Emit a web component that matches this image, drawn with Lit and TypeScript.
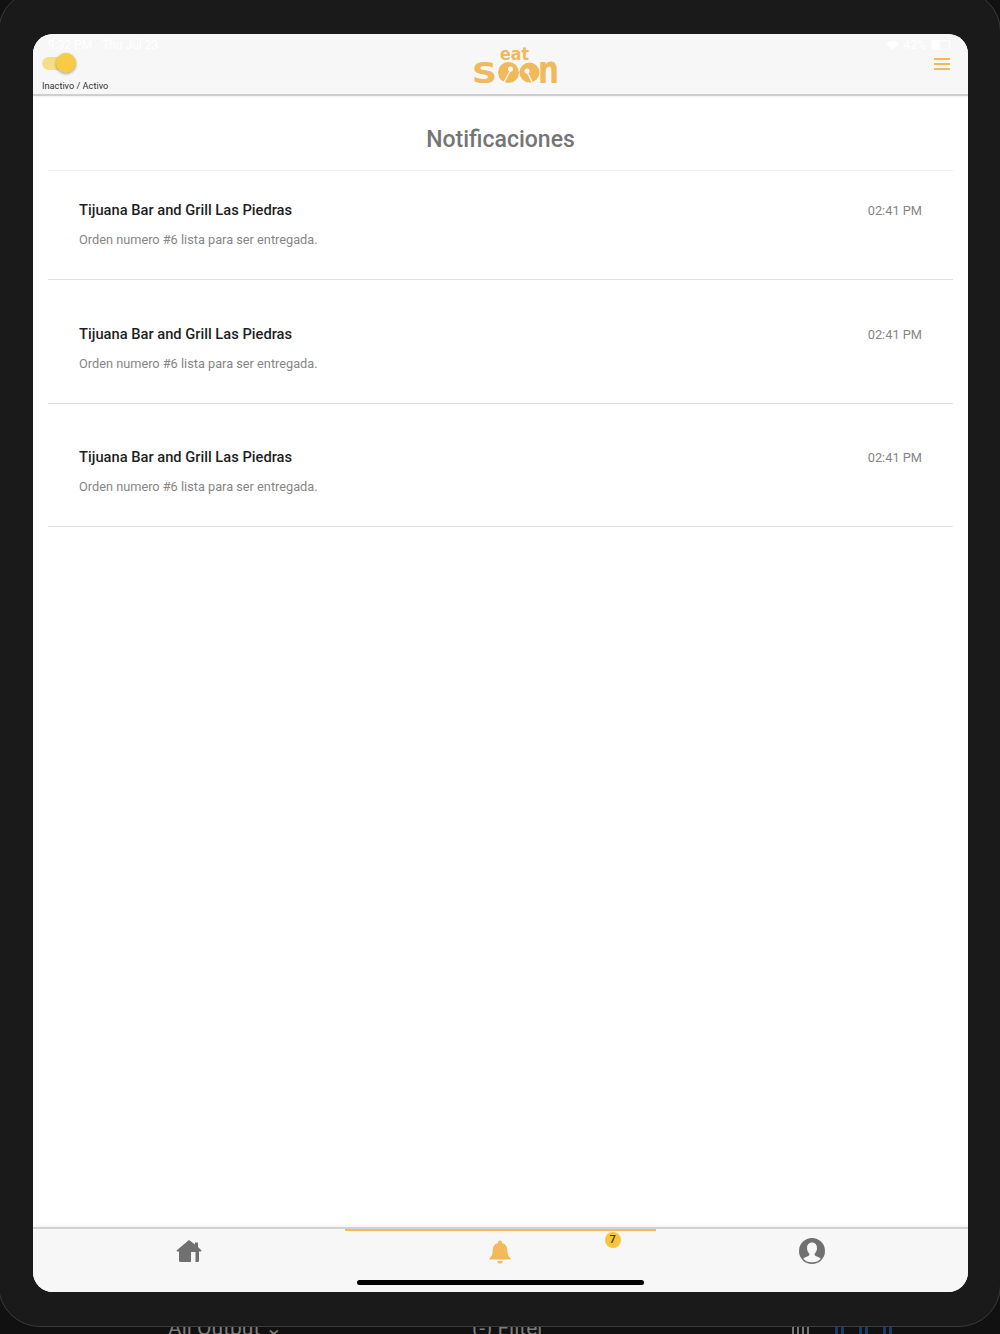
import { LitElement, html, css } from 'lit';
import { customElement } from 'lit/decorators.js';

const NOTIFICATIONS = [
  { title: 'Tijuana Bar and Grill Las Piedras', body: 'Orden numero #6 lista para ser entregada.', time: '02:41 PM' },
  { title: 'Tijuana Bar and Grill Las Piedras', body: 'Orden numero #6 lista para ser entregada.', time: '02:41 PM' },
  { title: 'Tijuana Bar and Grill Las Piedras', body: 'Orden numero #6 lista para ser entregada.', time: '02:41 PM' },
];

const logo = html`
  <svg class="logo" width="90" height="38" viewBox="0 0 90 38" aria-label="eat soon">
    <g fill="#f0b95a" font-family="'DejaVu Sans', sans-serif" font-weight="700">
      <text x="29" y="13" font-size="17" textLength="29" lengthAdjust="spacingAndGlyphs">eat</text>
      <text x="1" y="36" font-size="29" textLength="25" lengthAdjust="spacingAndGlyphs">S</text>
      <text x="67" y="36" font-size="37" textLength="21" lengthAdjust="spacingAndGlyphs">n</text>
    </g>
    <!-- the two O are plates with a spoon cut out -->
    <circle cx="37.5" cy="25.5" r="10.5" fill="#f0b95a" />
    <circle cx="39.5" cy="22" r="2.6" fill="#f7f7f7" />
    <path d="M38.8 23 L40 23.6 L33.5 36 L32.2 35.4 Z" fill="#f7f7f7" />
    <circle cx="58.5" cy="25.5" r="10" fill="#f0b95a" />
    <circle cx="56" cy="24" r="2.6" fill="#f7f7f7" />
    <path d="M55.4 25 L56.6 24.4 L62 35.2 L60.7 35.8 Z" fill="#f7f7f7" />
  </svg>
`;

const homeIcon = html`
  <svg width="26" height="24" viewBox="0 0 26 24">
    <path d="M13 1 L19 5.5 V3.5 H22 V8 L25.5 11.5 L25 12.6 H23 V21.5 Q23 23 21.5 23 H4.5 Q3 23 3 21.5 V12.6 H1 L.5 11.5 Z" fill="#707070" />
    <rect x="15" y="13" width="4.5" height="10" fill="#f7f7f7" />
  </svg>
`;

const bellIcon = html`
  <svg width="22" height="24" viewBox="0 0 22 24">
    <path d="M11 0.5 a2 2 0 0 1 2 2 v.6 c3.6 1 5.4 3.8 5.4 7.4 c0 3.7 .9 5.6 3 7.7 v1.3 H.6 v-1.3 c2.1-2.1 3-4 3-7.7 c0-3.6 1.8-6.4 5.4-7.4 v-.6 a2 2 0 0 1 2-2 Z" fill="#f3b95a" />
    <path d="M8.4 21 h5.2 a2.6 2.6 0 0 1-5.2 0 Z" fill="#f3b95a" />
  </svg>
`;

const userIcon = html`
  <svg width="26" height="26" viewBox="0 0 26 26">
    <circle cx="13" cy="13" r="13" fill="#707070" />
    <path d="M13 4.5 c3.2 0 5 2.4 5 5.6 c0 2.4-1 4.4-2.3 5.6 c-.4 1.6 .6 2.2 2.2 2.8 c1.6 .6 3 1.2 3.8 2.2 A10.8 10.8 0 0 1 13 24.2 A10.8 10.8 0 0 1 4.3 20.7 c.8-1 2.2-1.6 3.8-2.2 c1.6-.6 2.6-1.2 2.2-2.8 C9 14.5 8 12.5 8 10.1 c0-3.2 1.8-5.6 5-5.6 Z" fill="#f7f7f7" />
  </svg>
`;

const wifiIcon = html`
  <svg width="13" height="10" viewBox="0 0 13 10">
    <path d="M6.5 10 L0 3.4 A9.4 9.4 0 0 1 13 3.4 Z" fill="#fff" />
  </svg>
`;

@customElement('app-root')
export class AppRoot extends LitElement {
  static styles = css`
    :host {
      display: block;
      font-family: Roboto, 'Liberation Sans', sans-serif;
    }
    .desk {
      position: relative;
      height: 1334px;
      overflow: hidden;
      background: #111111;
    }
    .desk-text {
      position: absolute;
      top: 1315px;
      font-size: 21px;
      line-height: 26px;
      color: #7c7c7c;
      white-space: nowrap;
    }
    .all-output { left: 168px; }
    .filter { left: 472px; }
    .meters {
      position: absolute;
      top: 1327px;
      left: 792px;
      display: flex;
      gap: 3px;
    }
    .meters i {
      width: 2px;
      height: 7px;
      background: #777;
    }
    .meters i.blue {
      width: 3px;
      background: #1d3a66;
    }
    .meters i.first { margin-left: 23px; }
    .meters i.group { margin-left: 12px; }
    .device {
      position: absolute;
      top: -10px;
      left: -2px;
      width: 1003px;
      height: 1337px;
      box-sizing: border-box;
      padding: 43px 32px 34px 34px;
      display: flex;
      border: 1px solid #3a3a3a;
      border-radius: 42px;
      background: #1a1a1a;
    }
    .screen {
      position: relative;
      flex: 1;
      display: flex;
      flex-direction: column;
      border-radius: 20px;
      overflow: hidden;
      background: #fff;
    }
    .header {
      position: relative;
      flex: none;
      height: 60px;
      display: flex;
      justify-content: space-between;
      padding: 0 18px 0 9px;
      background: #f7f7f7;
      border-bottom: 2px solid #cfcfcf;
      box-shadow: 0 1px 2px rgba(0, 0, 0, 0.06);
    }
    .status {
      position: absolute;
      top: 4px;
      left: 15px;
      right: 18px;
      display: flex;
      align-items: center;
      gap: 10px;
      font-size: 12px;
      line-height: 14px;
      color: #fff;
    }
    .status .right {
      margin-left: auto;
      display: flex;
      align-items: center;
      gap: 5px;
    }
    .battery {
      width: 17px;
      height: 8px;
      border-radius: 2px;
      background: linear-gradient(90deg, #fff 45%, transparent 45%);
      border: 1px solid rgba(255, 255, 255, 0.6);
    }
    .toggle-wrap {
      width: 66px;
      padding-top: 23px;
    }
    .toggle {
      position: relative;
      width: 28px;
      height: 13px;
      border-radius: 7px;
      background: #f5dd8a;
    }
    .thumb {
      position: absolute;
      top: -4px;
      left: 14px;
      width: 20px;
      height: 20px;
      border-radius: 50%;
      background: #f8cb45;
      box-shadow: 0 1px 3px rgba(0, 0, 0, 0.35);
    }
    .toggle-label {
      margin-top: 10px;
      font-size: 9.2px;
      line-height: 12px;
      color: #333;
      white-space: nowrap;
    }
    .logo {
      display: block;
      margin: 13px 0 0 -10px;
    }
    .menu {
      width: 16px;
      padding-top: 24px;
      display: flex;
      flex-direction: column;
      gap: 3px;
    }
    .menu i {
      height: 2px;
      background: #f3b95a;
    }
    .content {
      flex: 1;
      padding: 0 15px;
    }
    h1 {
      margin: 0;
      height: 75px;
      box-sizing: border-box;
      padding-top: 29px;
      border-bottom: 1px solid #eeeeee;
      text-align: center;
      font-size: 23px;
      font-weight: 500;
      line-height: 30px;
      color: #757575;
    }
    .list {
      display: flex;
      flex-direction: column;
      gap: 14.5px;
    }
    .item {
      height: 109px;
      box-sizing: border-box;
      padding: 29px 31px 0;
      border-bottom: 1px solid #e0e0e0;
    }
    .row {
      display: flex;
      justify-content: space-between;
      align-items: baseline;
    }
    .name {
      font-size: 14.7px;
      font-weight: 500;
      line-height: 20px;
      color: #1f1f1f;
    }
    .time {
      font-size: 12.8px;
      line-height: 20px;
      color: #868686;
    }
    .body {
      margin-top: 9px;
      font-size: 12.75px;
      line-height: 20px;
      color: #868686;
    }
    .tabs {
      position: relative;
      flex: none;
      height: 63px;
      display: grid;
      grid-template-columns: repeat(3, 1fr);
      background: #f7f7f7;
      border-top: 2px solid #d2d2d2;
      box-shadow: 0 -2px 3px rgba(0, 0, 0, 0.05);
    }
    .tab {
      position: relative;
      display: flex;
      justify-content: center;
      padding-top: 11px;
    }
    .tab svg {
      display: block;
    }
    .tab.home svg {
      margin-top: -1px;
    }
    .tab.active {
      box-shadow: inset 0 2px 0 #f3b95a;
    }
    .tab.profile svg {
      margin-top: -2px;
    }
    .badge {
      position: absolute;
      top: 3px;
      left: 260px;
      width: 16px;
      height: 16px;
      border-radius: 50%;
      background: #f8c53a;
      text-align: center;
      font-size: 11px;
      font-weight: 500;
      line-height: 16px;
      color: #333;
    }
    .home-bar {
      position: absolute;
      bottom: 7px;
      left: 324px;
      width: 287px;
      height: 5px;
      border-radius: 3px;
      background: #000;
    }
  `;

  render() {
    return html`
      <div class="desk">
        <span class="desk-text all-output">All Output ⌄</span>
        <span class="desk-text filter">(-) Filter</span>
        <div class="meters">
          <i></i><i></i><i></i><i></i>
          <i class="blue first"></i><i class="blue"></i>
          <i class="blue group"></i><i class="blue"></i>
          <i class="blue group"></i><i class="blue"></i>
        </div>
        <div class="device">
          <div class="screen">
            <div class="header">
              <div class="status">
                <span>9:32 PM</span><span>Thu Jul 23</span>
                <span class="right">${wifiIcon}<span>42%</span><span class="battery"></span></span>
              </div>
              <div class="toggle-wrap">
                <div class="toggle"><div class="thumb"></div></div>
                <div class="toggle-label">Inactivo / Activo</div>
              </div>
              ${logo}
              <div class="menu"><i></i><i></i><i></i></div>
            </div>
            <div class="content">
              <h1>Notificaciones</h1>
              <div class="list">
                ${NOTIFICATIONS.map(
                  (n) => html`
                    <div class="item">
                      <div class="row">
                        <span class="name">${n.title}</span>
                        <span class="time">${n.time}</span>
                      </div>
                      <div class="body">${n.body}</div>
                    </div>
                  `
                )}
              </div>
            </div>
            <div class="tabs">
              <div class="tab home">${homeIcon}</div>
              <div class="tab active">${bellIcon}<span class="badge">7</span></div>
              <div class="tab profile">${userIcon}</div>
            </div>
            <div class="home-bar"></div>
          </div>
        </div>
      </div>
    `;
  }
}
